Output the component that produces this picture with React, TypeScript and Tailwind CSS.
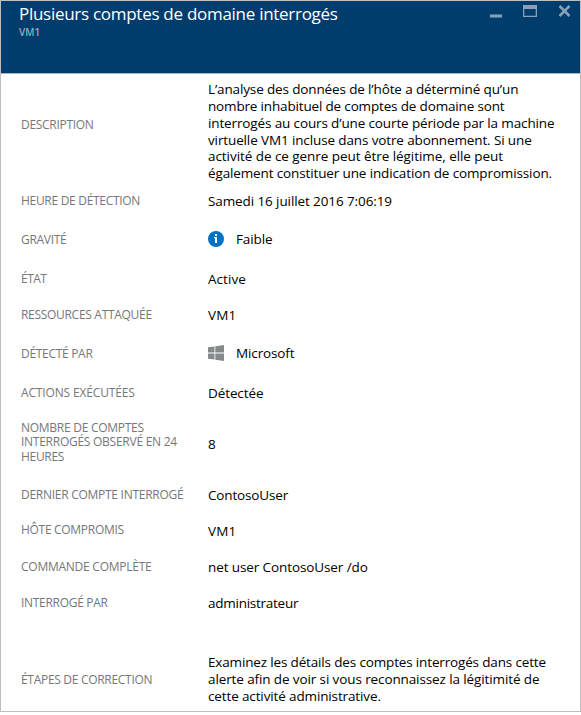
import type { ReactNode } from "react";

type Line = { text: string; track: string };

type Row = {
  box: string;
  labelBox: string;
  label: Line[];
  icon?: ReactNode;
  value: Line[];
};

const InfoIcon = () => (
  <svg className="mr-[12px] mb-[2px] h-4 w-4 shrink-0" viewBox="0 0 16 16">
    <circle cx="8" cy="8" r="8" fill="#0072c6" />
    <rect x="7" y="3" width="2" height="2" fill="#fff" />
    <path d="M6 6h3v6H7V7H6z" fill="#fff" />
  </svg>
);

const WindowsIcon = () => (
  <svg className="mr-[12px] mb-[2px] h-4 w-4 shrink-0" viewBox="0 0 16 16" fill="#86898c">
    <path d="M0 2.3 6.5 1.4V7.6H0zM7.3 1.3 16 0V7.6H7.3zM0 8.4H6.5V14.6L0 13.7zM7.3 8.4H16V16L7.3 14.7z" />
  </svg>
);

const rows: Row[] = [
  {
    box: "h-[115px]",
    labelBox: "pb-[13px]",
    label: [{ text: "DESCRIPTION", track: "tracking-[-0.3px]" }],
    value: [
      { text: "L’analyse des données de l’hôte a déterminé qu’un", track: "tracking-[-0.135px]" },
      { text: "nombre inhabituel de comptes de domaine sont", track: "tracking-[-0.165px]" },
      { text: "interrogés au cours d’une courte période par la machine", track: "tracking-[-0.13px]" },
      { text: "virtuelle VM1 incluse dans votre abonnement. Si une", track: "tracking-[-0.125px]" },
      { text: "activité de ce genre peut être légitime, elle peut", track: "tracking-[-0.055px]" },
      { text: "également constituer une indication de compromission.", track: "tracking-[-0.13px]" },
    ],
  },
  {
    box: "h-[25px]",
    labelBox: "",
    label: [{ text: "HEURE DE DÉTECTION", track: "tracking-[-0.3px]" }],
    value: [{ text: "Samedi 16 juillet 2016 7:06:19", track: "tracking-[-0.1px]" }],
  },
  {
    box: "mt-[13px] h-[25px]",
    labelBox: "pt-[2px]",
    label: [{ text: "GRAVITÉ", track: "tracking-[-0.3px]" }],
    icon: <InfoIcon />,
    value: [{ text: "Faible", track: "tracking-[-0.1px]" }],
  },
  {
    box: "mt-[15px] h-[25px]",
    labelBox: "",
    label: [{ text: "ÉTAT", track: "tracking-[-0.5px]" }],
    value: [{ text: "Active", track: "tracking-[0.05px]" }],
  },
  {
    box: "mt-[11px] h-[25px]",
    labelBox: "",
    label: [{ text: "RESSOURCES ATTAQUÉE", track: "tracking-[-0.3px]" }],
    value: [{ text: "VM1", track: "tracking-[0.1px]" }],
  },
  {
    box: "mt-[13px] h-[25px]",
    labelBox: "pt-[2px]",
    label: [{ text: "DÉTECTÉ PAR", track: "tracking-[-0.3px]" }],
    icon: <WindowsIcon />,
    value: [{ text: "Microsoft", track: "tracking-[-0.12px]" }],
  },
  {
    box: "mt-[15px] h-[25px]",
    labelBox: "",
    label: [{ text: "ACTIONS EXÉCUTÉES", track: "tracking-[-0.15px]" }],
    value: [{ text: "Détectée", track: "tracking-[-0.1px]" }],
  },
  {
    box: "mt-[13px] h-[51px]",
    labelBox: "pb-[4px]",
    label: [
      { text: "NOMBRE DE COMPTES", track: "tracking-[-0.27px]" },
      { text: "INTERROGÉS OBSERVÉ EN 24", track: "tracking-[-0.26px]" },
      { text: "HEURES", track: "tracking-[-0.3px]" },
    ],
    value: [{ text: "8", track: "tracking-[-0.1px]" }],
  },
  {
    box: "mt-[13px] h-[25px]",
    labelBox: "",
    label: [{ text: "DERNIER COMPTE INTERROGÉ", track: "tracking-[-0.27px]" }],
    value: [{ text: "ContosoUser", track: "tracking-[-0.15px]" }],
  },
  {
    box: "mt-[11px] h-[25px]",
    labelBox: "pb-[2px]",
    label: [{ text: "HÔTE COMPROMIS", track: "tracking-[-0.3px]" }],
    value: [{ text: "VM1", track: "tracking-[0.1px]" }],
  },
  {
    box: "mt-[11px] h-[25px]",
    labelBox: "",
    label: [{ text: "COMMANDE COMPLÈTE", track: "tracking-[-0.25px]" }],
    value: [{ text: "net user ContosoUser /do", track: "tracking-[-0.1px]" }],
  },
  {
    box: "mt-[11px] h-[25px]",
    labelBox: "",
    label: [{ text: "INTERROGÉ PAR", track: "tracking-[-0.3px]" }],
    value: [{ text: "administrateur", track: "tracking-[-0.26px]" }],
  },
  {
    box: "mt-[38px] h-[51px]",
    labelBox: "pt-[2px]",
    label: [{ text: "ÉTAPES DE CORRECTION", track: "tracking-[-0.3px]" }],
    value: [
      { text: "Examinez les détails des comptes interrogés dans cette", track: "tracking-[-0.155px]" },
      { text: "alerte afin de voir si vous reconnaissez la légitimité de", track: "tracking-[-0.11px]" },
      { text: "cette activité administrative.", track: "tracking-[-0.13px]" },
    ],
  },
];

const Lines = ({ lines }: { lines: Line[] }) => (
  <div>
    {lines.map((l) => (
      <div key={l.text} className={`whitespace-nowrap ${l.track}`}>
        {l.text}
      </div>
    ))}
  </div>
);

export default function App() {
  return (
    <div className="h-[715px] w-[581px] overflow-hidden bg-white font-['Open_Sans',sans-serif]">
      <div className="flex h-[712px] flex-col border border-[#bfbfbf] bg-white">
        <header className="flex h-[73px] shrink-0 justify-between border-b border-[#a9b8c6] bg-[#003c6c] pl-[18px]">
          <div>
            <h1 className="mt-[1px] text-[17px] leading-[24px] tracking-[-0.28px] whitespace-nowrap text-white">
              Plusieurs comptes de domaine interrogés
            </h1>
            <p className="text-[10px] leading-[13px] font-semibold text-[#8fabc4]">VM1</p>
          </div>
          <svg className="mr-[7px] h-[20px] w-[84px]" viewBox="0 0 84 20">
            <rect x="1" y="13.5" width="12" height="3" fill="#86a1b9" />
            <path fillRule="evenodd" fill="#86a1b9" d="M34 4h14v12H34zM35.3 8v6.7h11.4V8z" />
            <path d="M70.5 5 80.5 15M80.5 5 70.5 15" stroke="#86a1b9" strokeWidth="2.5" />
          </svg>
        </header>
        <dl>
          {rows.map((r) => (
            <div key={r.label[0].text} className={`flex items-center pl-[20px] ${r.box}`}>
              <dt className={`w-[187px] shrink-0 text-[12px] leading-[14.5px] text-[#74777c] ${r.labelBox}`}>
                <Lines lines={r.label} />
              </dt>
              <dd className="flex items-center text-[13.5px] leading-[16.9px] text-black">
                {r.icon}
                <Lines lines={r.value} />
              </dd>
            </div>
          ))}
        </dl>
      </div>
    </div>
  );
}
